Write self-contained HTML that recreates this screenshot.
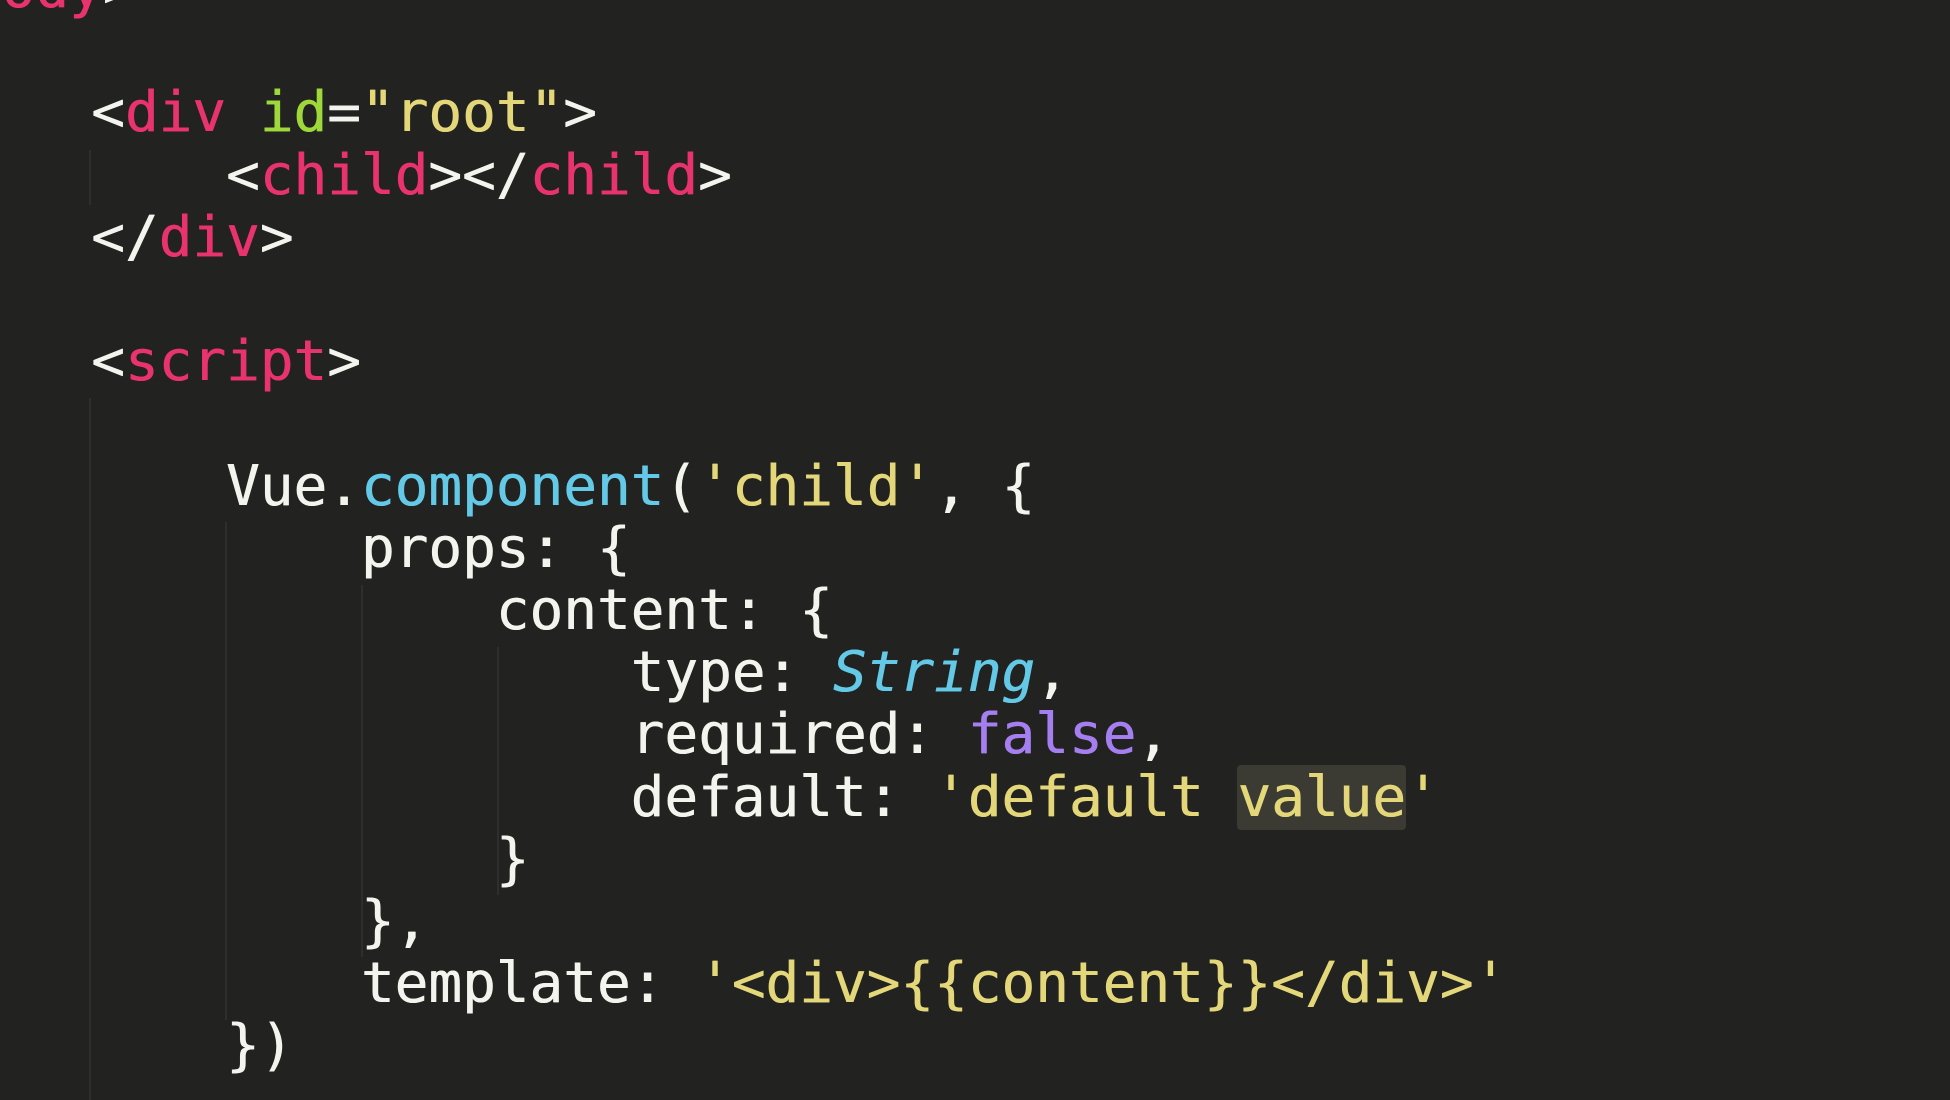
<!DOCTYPE html>
<html><head><meta charset="utf-8"><style>
html,body{margin:0;padding:0;background:#222220;width:1950px;height:1100px;overflow:hidden}
pre{position:absolute;left:91px;top:-42px;margin:0;font-family:"DejaVu Sans Mono","Liberation Mono",monospace;font-size:56px;line-height:62.2px;color:#f4f4ee;white-space:pre;text-shadow:0.6px 0 0 currentColor}
.t{color:#e8336f}.a{color:#9fd83a}.s{color:#e3d77a}.f{color:#63c9e6}.i{color:#63c9e6;font-style:italic}.p{color:#a57ef0}
.h{background:#3b3b34;border-radius:4px}
.g{position:absolute;width:2px;background:#2e2e2c}
</style></head><body>
<div class="g" style="left:89px;top:150px;height:55px"></div>
<div class="g" style="left:89px;top:398px;height:702px"></div>
<div class="g" style="left:225px;top:522px;height:498px"></div>
<div class="g" style="left:361px;top:585px;height:372px"></div>
<div class="g" style="left:497px;top:647px;height:248px"></div>
<pre style="left:-66px;top:-42px">&lt;<span class="t">body</span>&gt;</pre>
<pre>


&lt;<span class="t">div</span> <span class="a">id</span>=<span class="s">"root"</span>&gt;
    &lt;<span class="t">child</span>&gt;&lt;/<span class="t">child</span>&gt;
&lt;/<span class="t">div</span>&gt;

&lt;<span class="t">script</span>&gt;

    Vue.<span class="f">component</span>(<span class="s">'child'</span>, {
        props: {
            content: {
                type: <span class="i">String</span>,
                required: <span class="p">false</span>,
                default: <span class="s">'default <span class="h">value</span>'</span>
            }
        },
        template: <span class="s">'&lt;div&gt;{{content}}&lt;/div&gt;'</span>
    })
</pre>
</body></html>
